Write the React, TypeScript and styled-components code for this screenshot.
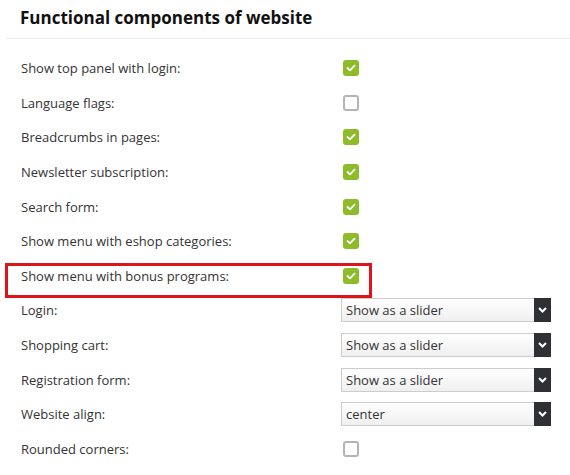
import styled, { createGlobalStyle } from 'styled-components';

const GlobalStyle = createGlobalStyle`
    body {
        margin: 0;
        background: #ffffff;
        font-family: 'Open Sans', 'DejaVu Sans', sans-serif;
    }
`;

type Field =
    | { label: string; kind: 'check'; checked: boolean; highlight?: boolean }
    | { label: string; kind: 'select'; value: string };

const fields: Field[] = [
    { label: 'Show top panel with login:', kind: 'check', checked: true },
    { label: 'Language flags:', kind: 'check', checked: false },
    { label: 'Breadcrumbs in pages:', kind: 'check', checked: true },
    { label: 'Newsletter subscription:', kind: 'check', checked: true },
    { label: 'Search form:', kind: 'check', checked: true },
    { label: 'Show menu with eshop categories:', kind: 'check', checked: true },
    { label: 'Show menu with bonus programs:', kind: 'check', checked: true, highlight: true },
    { label: 'Login:', kind: 'select', value: 'Show as a slider' },
    { label: 'Shopping cart:', kind: 'select', value: 'Show as a slider' },
    { label: 'Registration form:', kind: 'select', value: 'Show as a slider' },
    { label: 'Website align:', kind: 'select', value: 'center' },
    { label: 'Rounded corners:', kind: 'check', checked: false },
];

const Checkbox = ({ checked }: { checked: boolean }) => (
    <Box $checked={checked}>
        {checked && (
            <svg width="10" height="8" viewBox="0 0 10 8">
                <polyline points="1.5,4 4,6.3 8.5,1.6" fill="none" stroke="#fff" strokeWidth="1.8" strokeLinecap="round" strokeLinejoin="round" />
            </svg>
        )}
    </Box>
);

const Select = ({ value }: { value: string }) => (
    <SelectBox>
        <SelectValue>{value}</SelectValue>
        <SelectArrow>
            <svg width="9" height="6" viewBox="0 0 9 6">
                <polyline points="1,1 4.5,4.5 8,1" fill="none" stroke="#fff" strokeWidth="2" />
            </svg>
        </SelectArrow>
    </SelectBox>
);

export default function App() {
    return (
        <Page>
            <GlobalStyle />
            <Title>Functional components of website</Title>
            <List>
                {fields.map((f) => (
                    <Row key={f.label} $highlight={f.kind === 'check' && !!f.highlight}>
                        <Label>{f.label}</Label>
                        {f.kind === 'check' ? <Checkbox checked={f.checked} /> : <Select value={f.value} />}
                    </Row>
                ))}
            </List>
        </Page>
    );
}

/* Styles */
const Page = styled.div`
    width: 570px;
    height: 475px;
    overflow: hidden;
`;
const Title = styled.h2`
    margin: 0 0 0 5px;
    padding: 8px 0 10px 15px;
    font-size: 17px;
    line-height: 20px;
    font-weight: 700;
    color: #111;
    border-bottom: 1px solid #eeeeee;
`;
const List = styled.div`
    padding: 12px 0 0 5px;
`;
const Row = styled.div<{ $highlight: boolean }>`
    position: relative;
    display: grid;
    grid-template-columns: 320px 210px;
    align-items: center;
    height: 34.6px;
    padding-left: 16px;

    ${({ $highlight }) =>
        $highlight &&
        `
        &::after {
            content: '';
            position: absolute;
            left: 0;
            top: 4px;
            width: 367px;
            height: 35px;
            box-sizing: border-box;
            border: 3px solid #e0131a;
        }
    `}
`;
const Label = styled.span`
    font-size: 13px;
    color: #333;
`;
const Box = styled.span<{ $checked: boolean }>`
    display: flex;
    align-items: center;
    justify-content: center;
    box-sizing: border-box;
    width: 16px;
    height: 16px;
    margin-left: 2px;
    border-radius: 3px;
    background: ${({ $checked }) => ($checked ? '#8dbb2a' : '#fff')};
    border: ${({ $checked }) => ($checked ? 'none' : '2px solid #b4b4b4')};
`;
const SelectBox = styled.div`
    display: flex;
    height: 24px;
`;
const SelectValue = styled.div`
    flex: 1;
    box-sizing: border-box;
    display: flex;
    align-items: center;
    padding-left: 4px;
    font-size: 13px;
    color: #333;
    border: 1px solid #cccccc;
    border-right: none;
    background: linear-gradient(#ffffff, #efefef);
`;
const SelectArrow = styled.div`
    width: 17px;
    display: flex;
    align-items: center;
    justify-content: center;
    background: #2e3033;
`;
